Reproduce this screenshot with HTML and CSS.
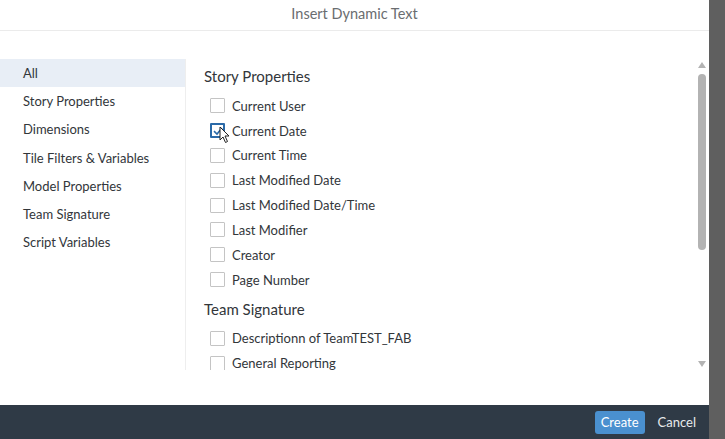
FILE: index.html
```html
<!DOCTYPE html>
<html>
<head>
<meta charset="utf-8">
<link rel="stylesheet" href="styles.css">
</head>
<body>
<div class="page">
  <div class="dialog">
    <header class="head">Insert Dynamic Text</header>
    <div class="body">
      <nav class="nav">
        <div class="nav-item selected">All</div>
        <div class="nav-item">Story Properties</div>
        <div class="nav-item">Dimensions</div>
        <div class="nav-item">Tile Filters &amp; Variables</div>
        <div class="nav-item">Model Properties</div>
        <div class="nav-item">Team Signature</div>
        <div class="nav-item">Script Variables</div>
      </nav>
      <div class="content">
        <div class="list">
          <h2 class="group">Story Properties</h2>
          <ul class="items">
            <li class="item"><span class="box"></span>Current User</li>
            <li class="item"><span class="box checked"><svg viewBox="0 0 14 14" width="14" height="14"><path d="M3 7.2 L6 10 L11 4" fill="none" stroke="#2b6aa8" stroke-width="1.6"/></svg><svg class="cursor" viewBox="0 0 12 18" width="12" height="18"><path d="M1 1 L1 14 L4 11 L6.5 16.5 L8.5 15.5 L6 10 L10 10 Z" fill="#fff" stroke="#222" stroke-width="1"/></svg></span>Current Date</li>
            <li class="item"><span class="box"></span>Current Time</li>
            <li class="item"><span class="box"></span>Last Modified Date</li>
            <li class="item"><span class="box"></span>Last Modified Date/Time</li>
            <li class="item"><span class="box"></span>Last Modifier</li>
            <li class="item"><span class="box"></span>Creator</li>
            <li class="item"><span class="box"></span>Page Number</li>
          </ul>
          <h2 class="group">Team Signature</h2>
          <ul class="items">
            <li class="item"><span class="box"></span>Descriptionn of TeamTEST_FAB</li>
            <li class="item"><span class="box"></span>General Reporting</li>
          </ul>
        </div>
        <div class="scrollbar">
          <span class="arrow up"></span>
          <span class="thumb"></span>
          <span class="track"></span>
          <span class="arrow down"></span>
        </div>
      </div>
    </div>
    <footer class="foot">
      <button class="btn primary">Create</button>
      <button class="btn plain">Cancel</button>
    </footer>
  </div>
  <div class="backdrop"></div>
</div>
</body>
</html>
```
FILE: styles.css
```css
* { box-sizing: border-box; }
html, body { margin: 0; padding: 0; }
body {
  width: 725px;
  height: 439px;
  overflow: hidden;
  font-family: Lato, "Open Sans", sans-serif;
  color: #32363a;
}
.page { display: flex; width: 725px; height: 439px; }
.dialog { width: 709px; display: flex; flex-direction: column; background: #fff; }
.backdrop { flex: 1; background: #5f5f5f; }

.head {
  height: 31px;
  border-bottom: 1px solid #ebebeb;
  display: flex;
  align-items: center;
  justify-content: center;
  font-size: 14.5px;
  color: #6a6d70;
  padding-bottom: 4px;
}

.body {
  flex: 1;
  display: flex;
  padding-top: 28px;
  padding-bottom: 35px;
  min-height: 0;
}
.nav {
  width: 186px;
  border-right: 1px solid #eeeeee;
}
.nav-item {
  height: 28.2px;
  display: flex;
  align-items: center;
  padding-left: 23px;
  font-size: 13px;
}
.nav-item.selected { background: #e8eef6; }

.content { flex: 1; display: flex; min-width: 0; }
.list { flex: 1; overflow: hidden; padding-left: 18px; }
.group {
  margin: 0;
  padding-top: 8px;
  font-size: 15px;
  font-weight: normal;
  line-height: 18px;
}
.group + .items { margin-top: 8.3px; }
.items + .group { margin-top: 7.5px; padding-top: 0; }
.items { list-style: none; margin: 0; padding: 0; }
.item {
  height: 24.85px;
  display: flex;
  align-items: center;
  font-size: 13px;
  padding-left: 6px;
}
.box {
  position: relative;
  width: 15px;
  height: 15px;
  border: 1px solid #c4c4c4;
  border-radius: 1px;
  margin-right: 7px;
  flex: none;
}
.box.checked { border: 2px solid #2b6aa8; }
.box.checked svg:first-child { position: absolute; left: -1px; top: -1px; }
.cursor { position: absolute; left: 7px; top: 1px; }

.scrollbar {
  width: 14px;
  display: flex;
  flex-direction: column;
  align-items: center;
  padding-top: 3px;
  padding-bottom: 3px;
}
.arrow { width: 0; height: 0; border-left: 4.5px solid transparent; border-right: 4.5px solid transparent; }
.arrow.up { border-bottom: 6px solid #b3b3b3; }
.arrow.down { border-top: 6px solid #b3b3b3; }
.thumb {
  margin-top: 6px;
  width: 8px;
  height: 176px;
  border-radius: 4px;
  background: #b3b3b3;
}
.track { flex: 1; }

.foot {
  height: 34px;
  background: #2f3a46;
  display: flex;
  align-items: center;
  justify-content: flex-end;
  padding-right: 5px;
  gap: 5px;
}
.btn {
  font-family: Lato, "Open Sans", sans-serif;
  font-size: 13px;
  border: none;
  height: 23px;
  padding: 0 8px;
  border-radius: 3px;
  cursor: default;
}
.btn.primary { background: #4a90cf; color: #fff; width: 50px; padding: 0; }
.btn.plain { background: transparent; color: #e8eaec; }
```
